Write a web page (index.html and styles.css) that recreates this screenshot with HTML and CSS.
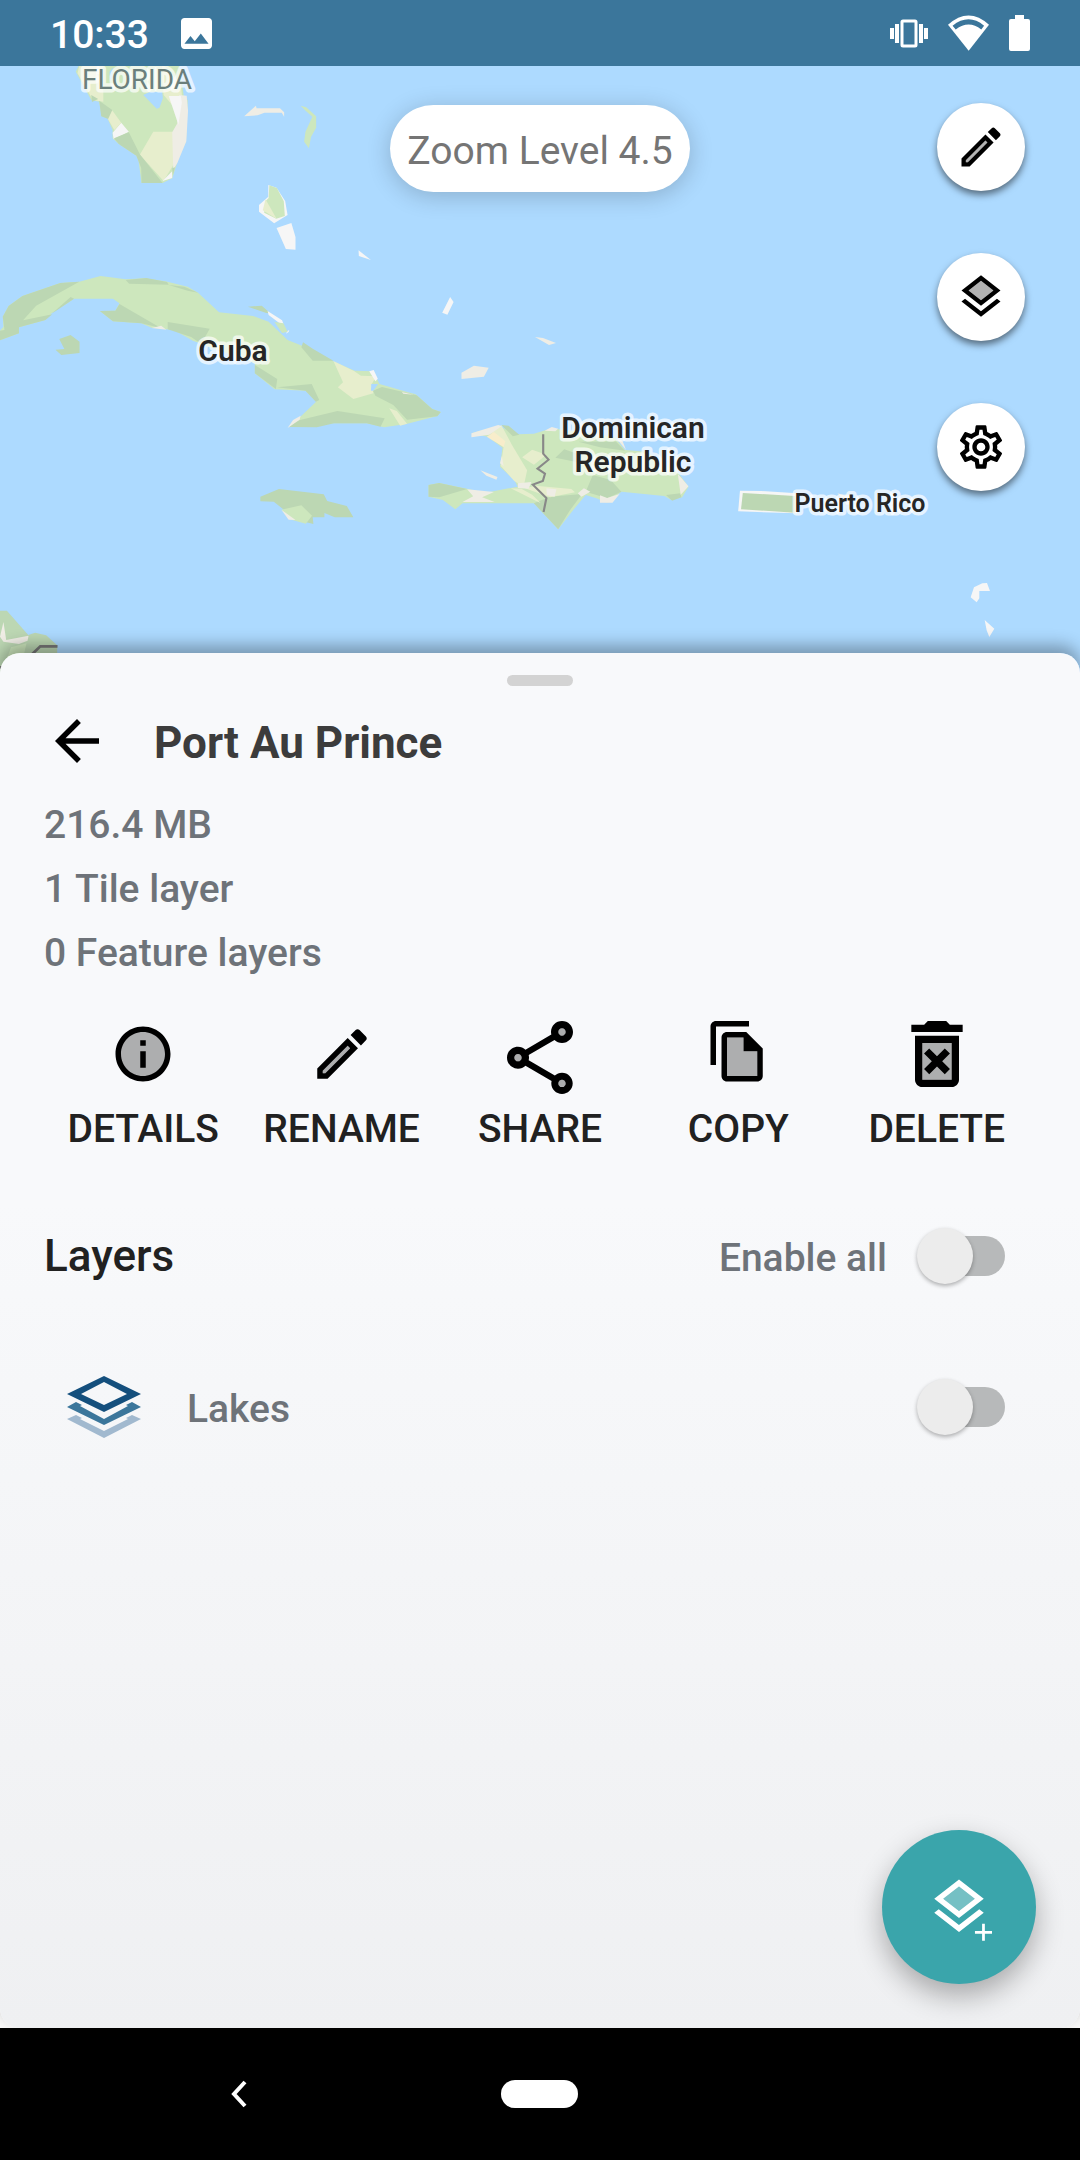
FILE: index.html
```html
<!DOCTYPE html>
<html lang="en">
<head>
<meta charset="utf-8">
<meta name="viewport" content="width=device-width, initial-scale=1">
<title>Port Au Prince</title>
<link rel="stylesheet" href="styles.css">
</head>
<body>
<header class="status">
  <span class="clock">10:33</span>
  <svg class="status-photo" viewBox="3 3 18 18" aria-hidden="true"><path fill="#fff" d="M21 19V5c0-1.100-.9-2-2-2H5c-1.100 0-2 .9-2 2v14c0 1.100.9 2 2 2h14c1.100 0 2-.9 2-2zM8.500 13.500l2.500 3.010L14.500 12l4.500 6H5l3.500-4.500z"/></svg>
  <div class="status-icons">
    <svg width="38" height="29" viewBox="0 0 38 29" aria-hidden="true">
      <rect x="12" y="2" width="14" height="25" rx="1" fill="none" stroke="#fff" stroke-width="3"/>
      <path fill="#fff" d="M0 9h4v11H0zM5 5h4v19H5zM29 5h4v19h-4zM34 9h4v11h-4z"/>
    </svg>
    <svg width="41" height="36" viewBox="1194 44 117 107" preserveAspectRatio="none" aria-hidden="true">
      <path fill="#fff" d="M1194 73Q1253 18 1311 73L1253 150z"/>
      <path fill="#3b769b" d="M1207 76Q1253 38 1297 76L1289 87Q1253 58 1216 87z"/>
    </svg>
    <svg width="21" height="36" viewBox="0 0 21 36" aria-hidden="true"><path fill="#fff" d="M6 0h9v4h4q2 0 2 2v28q0 2-2 2H2q-2 0-2-2V6q0-2 2-2h4z"/></svg>
  </div>
</header>

<main class="screen">
  <section class="map" aria-label="Map">
    <svg class="map-canvas" viewBox="0 66 1080 611" preserveAspectRatio="xMidYMin slice">
      <rect x="-1000" y="0" width="4000" height="800" fill="#addaff"/>
      <!-- Florida and Bahamas -->
      <g transform="scale(.3444 .3333)">
        <path fill="#cde7bd" d="M232 190H520L534 290 545 300 540 425 520 470 500 535 472 549H411L402 480 396 467 345 432 327 415V390L312 355 295 348 288 305 265 300 220 215z"/>
        <path fill="#e7eecd" d="M232 190h68v115l-30-5-45-80zM470 190l55 60 5 60-30 5-25-30zM445 395h70v80l-40 68-69-79z"/>
        <path fill="#addaff" d="M416 285l20-10h35l2 20-10 28-8 3zM318 215l10-12-2 30-6 10z"/>
        <path fill="#efede5" d="M520 285l22 2 4 45-5 92-26 65-12 20-3-112 15-27z"/>
        <path fill="#f6f6f6" d="M490 288h35l3 20-10 66zM352 368l22 27-44 23-3-20zM472 543l28-29v20z"/>
        <path fill="#e7eecd" d="M325 330l27 38-20 22-20-35z"/>
        <path fill="#bcd7b3" d="M288 302l38 28-12 27-20-8zM374 397l32 66 66 86h-61l-1-45-14-37-51-35-14-17zM265 285l20 12-18 9zM500 505l8-3-6 24z"/>
        <path fill="#efede5" d="M709 349l34-32 2 8h68l12 12v13l-7-12h-50l-20 8z"/>
        <path fill="#cde7bd" d="M873 317l16 5 29 27v34l-15 28-6 34-14-20 4-30 20-45-22-20z"/>
        <path fill="#f6f6f6" d="M779 555l24 8 25 40 7 42-39 25-44-35v-20l27-25z"/>
        <path fill="#cde7bd" d="M782 556l22 8 20 40 3 44-25 8-35-18 5-36 8-8z"/>
        <path fill="#e7eecd" d="M771 598l32 58-40-25z"/>
        <path fill="#f6f6f6" d="M803 684l43-15 12 42v38l-28-2zM1041 751l36 29-35-12zM1307 891l10 15-18 38-15-6z"/>
      </g>
      <!-- Cuba, Jamaica and Central America -->
      <g transform="translate(0 250) scale(.3444 .3333)">
        <path fill="#cde7bd" d="M0 271V242L10 230 8 200 25 168 65 138 175 99 230 95 292 78 365 88 420 85 480 94 545 110 575 128 636 187 735 198 780 215 835 270 908 300 970 335 1030 362 1083 364 1102 402 1180 425 1207 433 1255 477 1280 486 1270 498 1180 522 1115 532 1065 520H950L840 532 918 455 887 422 797 418 740 370V340L560 272 505 240 440 233 410 220 328 214 290 183 335 182 347 160 328 146H215L150 190 132 210 55 232V250z"/>
        <path fill="#bcd7b3" d="M0 271v-29l13-2-5-40 17-32 40-30 110-39 55-4-125 72-38 44 85-18-20 17-77 22v18zM365 90l60-6 60 12 5 8-115-3zM490 105l45 5 40 18-30-6zM290 183l45-1 12-20 120 72-57-14-82-6zM487 216l122 20-25 45-29-20-68-23zM720 170l40-3 25 23-12-1zM880 277l28 19 60 36h-60l-33-40zM740 345l65 42-4 30-61-47zM805 412l100-10 22 48-10 5-30-33zM862 512l118-29 137 22-12 25-40-10H970l-50 12-80-1zM1083 422l26-11 71 17 30 8 45 41 25 9-10 13-88 10-40-44-52-28zM205 141l10 5-65 45z"/>
        <path fill="#e7eecd" d="M968 333l60 30 20 14 45 2-14 24 5 27-58 17-45-35 15-15zM1130 475l22 8 30 38-20 6z"/>
        <path fill="#addaff" d="M1078 402h20l-14 20h-7z"/>
        <path fill="#f6f6f6" d="M777 183l42 28 4 10-13-3-30-23zM1072 364l13-4 12 26-7 8zM835 243l5-3-2 6-8 5z"/>
        <path fill="#cde7bd" d="M797 216l26 4 12 25-16 4z"/>
        <path fill="#efede5" d="M440 234l28-7 15 12zM835 534l16-24 22-13-3 12zM1340 368l36-21 43 6-14 27-65 7zM1167 426l34 8-30-3z"/>
        <path fill="#bcd7b3" d="M172 267l33-12 26 20v34l-53 6-17-16 26-2zM756 740l54-23 130 16 10 20 57 15 19 34h-54l-30-13v13h-34l2 20-50-13-65-54-39-1z"/>
        <path fill="#cde7bd" d="M817 779l58-13 31 31-18 24-39-11z"/>
        <path fill="#efede5" d="M817 779l41 31-20-1z"/>
        <path fill="#bcd7b3" d="M0 1082h20l62 73 20-7 32 8 32 30v50l-160 70H0z"/>
        <path fill="#efede5" d="M10 1116l8 54 65-13-3 15-25 10-45-7-10-15z"/>
        <path fill="#cde7bd" d="M32 1192l45-12-8 35-50 15z"/>
        <path fill="none" stroke="#777" stroke-width="8" d="M167 1189h-50l-30 30-90 35"/>
      </g>
      <!-- Hispaniola and Puerto Rico -->
      <g transform="translate(400 370) scale(.3571 .3333)">
        <path fill="#cde7bd" d="M200 190L275 168 330 193 375 191 425 175 600 200 630 240 690 245 780 310 808 350 790 382 760 390 740 378 620 365 580 398 550 385 520 375 485 420 443 478 375 400H175L155 418 120 390 80 380V345L110 339 190 357 240 368 330 350 320 330 280 290 287 233 245 200z"/>
        <path fill="#bcd7b3" d="M80 380v-35l30-6 78 18-78 25zM284 165l20 2 30 27-18 5zM435 263l25-25 40 15 5 25zM540 315l50 15 30 35-40 20-60-20zM500 215h105l25 27-70-10zM375 400l45-20 90-8-35 50-32 56zM745 375l40-5 3 12-26 10z"/>
        <path fill="#e7eecd" d="M262 180l22-14 30 60 42 75-10 50-26-18-38-46 8-55-35-40zM342 262l28-23 40 15-35 30zM350 355l30-8 100 10 10 10-70 15zM310 355l30 1 30 18 24 25-14-7z"/>
        <path fill="#efede5" d="M200 190l75-25 10 3-35 26-50 8zM330 340l38-4-8 20-30-2zM188 358l75 8-33 16 35 14h-90l30-17zM410 355l28 3-5 22-22-5zM515 355l18 10-25 15-10-10zM560 376l20 8 35-12-20 26h-35zM778 312l30 37-22 25zM605 204l18 8 10 28zM405 182l20-11 18 5-8 8zM225 301l48 20-3 8-28-12zM280 280l5-22 5 30z"/>
        <path fill="#f8edcb" d="M243 200l20-14 32 28-5 17z"/>
        <path fill="none" stroke="#888" stroke-width="6" d="M401 193v58l15 18-31 27 21 15-6 22-28 11 38 40-8 42"/>
        <path fill="#f6f6f6" d="M952 362l60 1 100 7v60l-165-6z"/>
        <path fill="#bcd7b3" d="M960 369l145 9v50l-150-10z"/>
        <path fill="#efede5" d="M1225 370l35 12-20 5z"/>
      </g>
      <!-- Lesser Antilles -->
      <g transform="translate(860 220) scale(.3333)" fill="#f6f6f6">
        <path d="M342 1102l25-12 14-1 9 24h-32v22l-8 12-18-15zM374 1200l29 26-15 25-8-20z"/>
      </g>
      <path fill="#efede5" d="M535 337l8 1 13 5-7 2z"/>
      <g class="map-labels">
        <text class="region" x="137" y="89">FLORIDA</text>
        <text x="233" y="361">Cuba</text>
        <text x="633" y="438">Dominican</text>
        <text x="633" y="472">Republic</text>
        <text class="small" x="860" y="512">Puerto Rico</text>
      </g>
    </svg>
    <output class="zoom-level">Zoom Level 4.5</output>
    <div class="map-tools">
      <button class="map-button" type="button" aria-label="Edit"><svg viewBox="0 0 24 24"><use href="#pencil" width="24" height="24"/></svg></button>
      <button class="map-button" type="button" aria-label="Map layers"><svg viewBox="0 0 24 24"><use href="#layers" width="24" height="24"/></svg></button>
      <button class="map-button" type="button" aria-label="Settings"><svg viewBox="0 0 24 24"><path d="M19.430 12.980c.04-.32.07-.64.07-.98 0-.34-.03-.66-.07-.98l2.110-1.650c.19-.15.24-.42.12-.64l-2-3.460c-.09-.16-.26-.25-.44-.25-.06 0-.12.01-.17.03l-2.490 1c-.52-.4-1.080-.73-1.690-.98l-.38-2.650C14.460 2.180 14.250 2 14 2h-4c-.25 0-.46.18-.49.42l-.38 2.650c-.61.25-1.170.59-1.690.98l-2.490-1c-.06-.02-.12-.03-.18-.03-.17 0-.34.09-.43.25l-2 3.460c-.13.22-.07.49.12.64l2.110 1.650c-.04.32-.07.65-.07.98 0 .33.03.66.07.98l-2.110 1.650c-.19.15-.24.42-.12.64l2 3.460c.09.16.26.25.44.25.06 0 .12-.01.17-.03l2.490-1c.52.4 1.080.73 1.690.98l.38 2.650c.03.24.24.42.49.42h4c.25 0 .46-.18.49-.42l.38-2.650c.61-.25 1.170-.59 1.690-.98l2.490 1c.06.02.12.03.18.03.17 0 .34-.09.43-.25l2-3.460c.12-.22.07-.49-.12-.64l-2.110-1.650zm-1.980-1.710c.04.31.05.52.05.73 0 .21-.02.43-.05.73l-.14 1.130.89.7 1.080.84-.7 1.210-1.270-.51-1.040-.42-.9.68c-.43.32-.84.56-1.250.73l-1.060.43-.16 1.130-.2 1.350h-1.400l-.19-1.350-.16-1.130-1.060-.43c-.43-.18-.83-.41-1.230-.71l-.91-.7-1.060.43-1.270.51-.7-1.210 1.080-.84.89-.7-.14-1.130c-.03-.31-.05-.54-.05-.74s.02-.43.05-.73l.14-1.130-.89-.7-1.080-.84.7-1.210 1.270.51 1.040.42.9-.68c.43-.32.84-.56 1.250-.73l1.060-.43.16-1.130.2-1.350h1.390l.19 1.350.16 1.130 1.060.43c.43.18.83.41 1.230.71l.91.7 1.060-.43 1.270-.51.7 1.210-1.070.85-.89.7.14 1.130zM12 8c-2.210 0-4 1.790-4 4s1.790 4 4 4 4-1.790 4-4-1.790-4-4-4zm0 6c-1.100 0-2-.9-2-2s.9-2 2-2 2 .9 2 2-.9 2-2 2z"/></svg></button>
    </div>
  </section>

  <section class="sheet">
    <div class="handle"></div>
    <div class="sheet-header">
      <button class="back" type="button" aria-label="Back"><svg viewBox="0 0 24 24"><path d="M20 11H7.830l5.590-5.590L12 4l-8 8 8 8 1.410-1.410L7.830 13H20v-2z"/></svg></button>
      <h1 class="title">Port Au Prince</h1>
    </div>
    <ul class="facts">
      <li>216.4 MB</li>
      <li>1 Tile layer</li>
      <li>0 Feature layers</li>
    </ul>
    <div class="actions">
      <button class="action" type="button">
        <svg viewBox="-4 -4 32 32"><circle cx="12" cy="12" r="9" opacity=".3"/><path d="M11 7h2v2h-2zm0 4h2v6h-2zm1-9C6.480 2 2 6.480 2 12s4.480 10 10 10 10-4.480 10-10S17.520 2 12 2zm0 18c-4.410 0-8-3.590-8-8s3.590-8 8-8 8 3.590 8 8-3.590 8-8 8z"/></svg>
        DETAILS
      </button>
      <button class="action" type="button">
        <svg viewBox="-4 -4 32 32"><use href="#pencil" width="24" height="24"/></svg>
        RENAME
      </button>
      <button class="action" type="button">
        <svg viewBox="0 -1 24 24"><g opacity=".3"><circle cx="18" cy="5" r="1"/><circle cx="6" cy="12" r="1"/><circle cx="18" cy="19" r="1"/></g><path d="M18 16.080c-.76 0-1.440.3-1.960.77L8.910 12.700c.05-.23.09-.46.09-.7s-.04-.47-.09-.7l7.050-4.110c.54.5 1.250.81 2.040.81 1.660 0 3-1.340 3-3s-1.340-3-3-3-3 1.340-3 3c0 .24.04.47.09.7L8.040 9.810C7.500 9.310 6.790 9 6 9c-1.660 0-3 1.340-3 3s1.340 3 3 3c.79 0 1.500-.31 2.040-.81l7.120 4.160c-.05.21-.08.43-.08.65 0 1.610 1.310 2.920 2.920 2.920s2.920-1.310 2.920-2.920-1.310-2.920-2.920-2.920zM18 4c.55 0 1 .45 1 1s-.45 1-1 1-1-.45-1-1 .45-1 1-1zM6 13c-.55 0-1-.45-1-1s.45-1 1-1 1 .45 1 1-.45 1-1 1zm12 7.020c-.55 0-1-.45-1-1s.45-1 1-1 1 .45 1 1-.45 1-1 1z"/></svg>
        SHARE
      </button>
      <button class="action" type="button">
        <svg viewBox="-4 -3 32 32"><path opacity=".3" d="M14 7H8v14h11v-9h-5z"/><path d="M16 1H4c-1.100 0-2 .9-2 2v14h2V3h12V1zm-1 4H8c-1.100 0-1.990.9-1.990 2L6 21c0 1.100.89 2 1.990 2H19c1.100 0 2-.9 2-2V11l-6-6zm4 16H8V7h6v5h5v9z"/></svg>
        COPY
      </button>
      <button class="action" type="button">
        <svg viewBox="0 0 24 24"><path opacity=".3" d="M8 9h8v10H8z"/><path d="M14.120 10.470L12 12.590l-2.130-2.120-1.410 1.410L10.590 14l-2.120 2.120 1.410 1.410L12 15.410l2.120 2.120 1.410-1.410L13.410 14l2.120-2.120zM15.500 4l-1-1h-5l-1 1H5v2h14V4zM6 19c0 1.100.9 2 2 2h8c1.100 0 2-.9 2-2V7H6v12zM8 9h8v10H8V9z"/></svg>
        DELETE
      </button>
    </div>
    <div class="row layers-head">
      <h2 class="section-title">Layers</h2>
      <label class="label" for="enable-all">Enable all</label>
      <input class="switch" type="checkbox" id="enable-all">
    </div>
    <div class="row layer">
      <svg class="layer-icon" width="74" height="62" viewBox="0 0 74 62" aria-hidden="true">
        <path fill="#a1b9cf" d="M0 43l9-4 6 3-2 1 24 12 24-12-2-1 6-3 9 4-37 19z"/>
        <path fill="#3b769b" d="M0 31l9-5 6 3-2 1 24 13 24-13-2-1 6-3 9 5-37 18z"/>
        <path fill="#144f7d" fill-rule="evenodd" d="M0 18L37 0l37 18-37 18zM14 18l23 11 23-11L37 6z"/>
      </svg>
      <label class="label layer-name" for="layer-lakes">Lakes</label>
      <input class="switch" type="checkbox" id="layer-lakes">
    </div>
    <button class="add-layer" type="button" aria-label="Add layer">
      <svg viewBox="0 0 24 24"><use href="#layers" width="24" height="24"/><path fill="none" stroke="#fff" stroke-width="1" d="M17.800 21.200h6.200M20.900 18.100v6.200"/></svg>
    </button>
  </section>
</main>

<nav class="system-nav">
  <button class="nav-button" type="button" aria-label="System back"><svg width="18" height="28" viewBox="0 0 18 28"><path fill="none" stroke="#fff" stroke-width="4" d="M15 2L4 14l11 12"/></svg></button>
  <button class="nav-button" type="button" aria-label="Home"><span class="home-pill"></span></button>
</nav>

<svg class="symbols" width="0" height="0" aria-hidden="true">
  <symbol id="pencil" viewBox="0 0 24 24"><path opacity=".3" d="M5 18.080V19h.92l9.060-9.060-.92-.92z"/><path d="M20.710 7.040c.39-.39.39-1.020 0-1.410l-2.340-2.340c-.2-.2-.45-.29-.71-.29s-.51.1-.7.29l-1.830 1.830 3.750 3.750 1.830-1.830zM3 17.250V21h3.750L17.810 9.940l-3.750-3.750L3 17.250zM5.920 19H5v-.92l9.060-9.060.92.92L5.920 19z"/></symbol>
  <symbol id="layers" viewBox="0 0 24 24"><path opacity=".3" d="M6.260 9L12 13.470 17.740 9 12 4.530z"/><path d="M19.370 12.800l-7.380 5.740-7.370-5.730L3 14.070l9 7 9-7zM12 2L3 9l1.630 1.270L12 16l7.360-5.730L21 9l-9-7zm0 11.470L6.260 9 12 4.530 17.740 9 12 13.470z"/></symbol>
</svg>
</body>
</html>
```
FILE: styles.css
```css
* {
  box-sizing: border-box;
}

body {
  margin: 0;
  min-height: 100vh;
  display: flex;
  flex-direction: column;
  background: #fafafa;
  font-family: Roboto, "Liberation Sans", sans-serif;
  font-size: 39px;
  line-height: 44px;
  color: #212121;
}

button {
  margin: 0;
  padding: 0;
  border: 0;
  background: none;
  font: inherit;
  color: inherit;
}

svg {
  display: block;
}

.symbols {
  position: absolute;
}

.status {
  display: flex;
  align-items: center;
  height: 66px;
  padding: 0 50px;
  background: #3b769b;
  color: #fff;
}

.clock {
  padding-top: 4px;
  font-weight: 500;
}

.status-photo {
  width: 31px;
  height: 31px;
  margin-left: 32px;
}

.status-icons {
  display: flex;
  align-items: center;
  gap: 20px;
  margin-left: auto;
}

.screen {
  flex: 1;
  display: flex;
  flex-direction: column;
}

.map {
  position: relative;
  flex: 0 0 611px;
  margin-bottom: -24px;
  background: #addaff;
}

.map-canvas {
  width: 100%;
  height: 611px;
}

.map-labels {
  font-size: 30px;
  font-weight: 600;
  text-anchor: middle;
  fill: #262626;
  stroke: rgba(255, 255, 255, .7);
  stroke-width: 7px;
  stroke-linejoin: round;
  paint-order: stroke;
}

.map-labels .region {
  font-size: 28px;
  font-weight: 400;
  fill: #6b7f7c;
}

.map-labels .small {
  font-size: 25px;
}

.zoom-level {
  position: absolute;
  top: 39px;
  left: 50%;
  width: 300px;
  padding: 24px 0 19px;
  transform: translateX(-50%);
  border-radius: 44px;
  background: #fff;
  box-shadow: 0 4px 24px rgba(0, 0, 0, .2);
  color: #757575;
  text-align: center;
  white-space: nowrap;
}

.map-tools {
  position: absolute;
  top: 37px;
  right: 55px;
  display: flex;
  flex-direction: column;
  gap: 62px;
}

.map-button {
  display: grid;
  place-items: center;
  width: 88px;
  height: 88px;
  border-radius: 50%;
  background: #fff;
  box-shadow: 0 4px 7px rgba(0, 0, 0, .5);
}

.map-button svg {
  width: 52px;
  height: 52px;
}

.sheet {
  position: relative;
  flex: 1;
  padding: 22px 44px 220px;
  border-radius: 20px;
  background: linear-gradient(#f8f9fb 40%, #eff0f2);
  box-shadow: 0 -8px 16px rgba(0, 0, 0, .3);
}

.handle {
  width: 66px;
  height: 11px;
  margin: 0 auto 22px;
  border-radius: 6px;
  background: #d3d3d3;
}

.sheet-header {
  display: flex;
  align-items: center;
  gap: 44px;
}

.back svg {
  width: 66px;
  height: 66px;
}

.title {
  margin: 0;
  padding-top: 4px;
  font-size: 44px;
  line-height: 52px;
  font-weight: 700;
  color: #3c3c3c;
}

.facts {
  margin: 19px 0 25px;
  padding: 0;
  list-style: none;
  line-height: 64px;
  font-weight: 500;
  color: #6e7379;
}

.actions {
  display: grid;
  grid-template-columns: repeat(5, 1fr);
}

.action {
  display: flex;
  flex-direction: column;
  align-items: center;
  gap: 9px;
  font-weight: 500;
}

.action svg {
  width: 88px;
  height: 88px;
}

.row {
  display: flex;
  align-items: center;
  height: 66px;
  padding-right: 31px;
}

.layers-head {
  margin-top: 72px;
  gap: 30px;
}

.section-title {
  flex: 1;
  margin: 0;
  font-size: 44px;
  line-height: 52px;
  font-weight: 500;
}

.label {
  padding-top: 4px;
  font-weight: 500;
  color: #6e7379;
}

.layer {
  margin-top: 85px;
  padding-left: 23px;
  gap: 46px;
}

.layer-name {
  flex: 1;
}

.switch {
  appearance: none;
  display: grid;
  align-items: center;
  width: 88px;
  height: 56px;
  margin: 0;
}

.switch::before,
.switch::after {
  content: "";
  grid-area: 1 / 1;
}

.switch::before {
  height: 40px;
  margin-left: 8px;
  border-radius: 20px;
  background: #b7b9ba;
}

.switch::after {
  width: 56px;
  height: 56px;
  border-radius: 50%;
  background: #ececec;
  box-shadow: 0 2px 4px rgba(0, 0, 0, .3);
}

.switch:checked::after {
  justify-self: end;
}

.add-layer {
  position: absolute;
  right: 44px;
  bottom: 44px;
  display: grid;
  place-items: center;
  width: 154px;
  height: 154px;
  border-radius: 50%;
  background: #3aa5ab;
  box-shadow: 0 12px 28px rgba(0, 0, 0, .3);
}

.add-layer svg {
  width: 66px;
  height: 66px;
  fill: #fff;
  overflow: visible;
}

.system-nav {
  position: relative;
  display: grid;
  grid-template-columns: repeat(3, 1fr);
  height: 132px;
  padding: 0 88px;
  background: #000;
}

.nav-button {
  display: grid;
  place-items: center;
}

.home-pill {
  width: 77px;
  height: 28px;
  border-radius: 14px;
  background: #fff;
}
```
